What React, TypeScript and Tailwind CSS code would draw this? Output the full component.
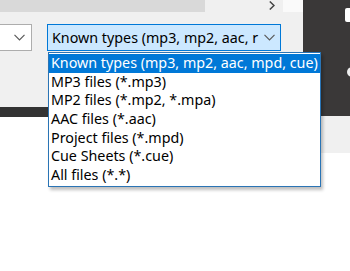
const options = [
  'Known types (mp3, mp2, aac, mpd, cue)',
  'MP3 files (*.mp3)',
  'MP2 files (*.mp2, *.mpa)',
  'AAC files (*.aac)',
  'Project files (*.mpd)',
  'Cue Sheets (*.cue)',
  'All files (*.*)',
];

function Chevron() {
  return (
    <svg width="11" height="7" viewBox="0 0 11 7" className="shrink-0">
      <polyline points="0.5,0.8 5.5,5.8 10.5,0.8" fill="none" stroke="#5a5a5a" strokeWidth="1.2" />
    </svg>
  );
}

export default function App() {
  return (
    <div className="relative w-[350px] h-[271px] overflow-hidden bg-white font-['Noto_Sans',sans-serif] text-[14.3px] text-black">
      <div className="flex">
        {/* dialog area */}
        <div className="w-[303px] flex flex-col">
          <div className="h-[107px] bg-[#f0f0f0] flex flex-col">
            <div className="flex h-[12px]">
              <div className="w-[205px] bg-[#d9d9d9]" />
              <div className="w-[78px] relative">
                <svg width="6" height="9" viewBox="0 0 6 9" className="absolute left-[64px] top-[1px]">
                  <polyline points="0.8,0.5 5,4.5 0.8,8.5" fill="none" stroke="#444" strokeWidth="1.5" />
                </svg>
              </div>
              <div className="w-[20px] bg-[#fafafa]" />
            </div>
            <div className="flex items-start mt-[12px] h-[27px]">
              <div className="-ml-px w-[33px] h-[27px] bg-white border border-[#adadad] flex items-center justify-end pr-[6px]">
                <Chevron />
              </div>
              <div className="ml-[15px] w-[234px] h-[27px] bg-[#cce8ff] border border-[#0078d7] flex items-center pl-[4px] pr-[5px]">
                <span className="flex-1 whitespace-nowrap overflow-hidden leading-[20px]">Known types (mp3, mp2, aac, r</span>
                <Chevron />
              </div>
            </div>
          </div>
          <div className="h-[10px] bg-[#333333]" />
        </div>
        {/* dark window behind */}
        <div className="w-[47px] flex flex-col">
          <div className="h-[116px] bg-[#3a3838] relative">
            <div className="absolute left-[42px] top-[8px] w-[8px] h-[14px] bg-white rounded-l-[2px]" />
            <div className="absolute left-[44px] top-[67px] w-[6px] h-[10px] bg-[#eeeeee] rounded-l-full" />
          </div>
          <div className="h-[37px] bg-[#f0f0f0]" />
        </div>
      </div>

      {/* open list */}
      <div className="absolute left-[48px] top-[52px] w-[273px] bg-white border border-[#2a74b5] shadow-[2px_3px_3px_rgba(0,0,0,0.25)] py-px">
        {options.map((o, i) => (
          <div
            key={o}
            className={`h-[18.7px] leading-[18.7px] pl-[2px] whitespace-nowrap ${i === 0 ? 'bg-[#0078d7] text-white' : ''}`}
          >
            {o}
          </div>
        ))}
      </div>
    </div>
  );
}
